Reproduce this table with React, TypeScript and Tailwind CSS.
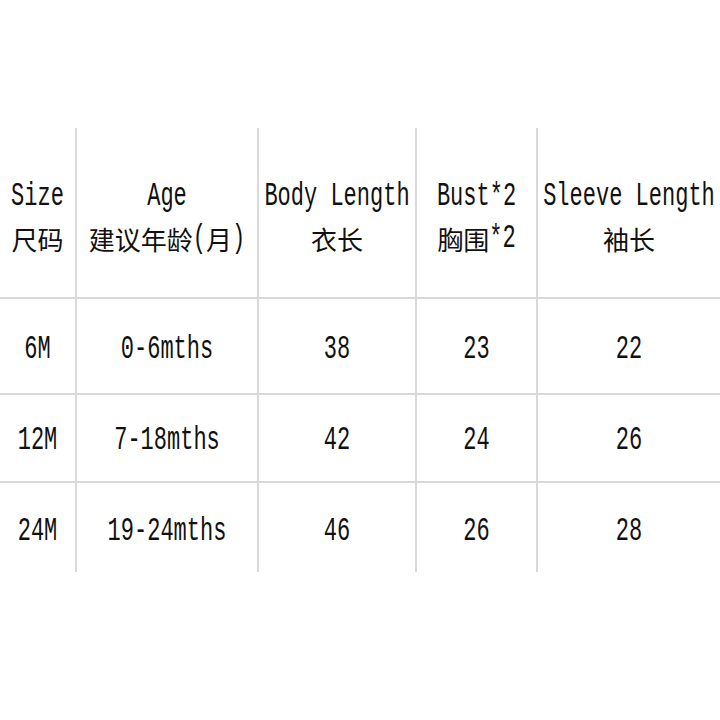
import React from "react";

const L = ({ children }: { children: React.ReactNode }) => (
  <span className="inline-block font-['Liberation_Mono',monospace] text-[22px] leading-[44px] scale-y-[1.55] whitespace-pre text-[#111]">
    {children}
  </span>
);

const C = ({ children }: { children: React.ReactNode }) => (
  <span className="inline-block font-['Noto_Sans_CJK_SC',sans-serif] text-[26px] leading-[44px] text-[#111]">
    {children}
  </span>
);

const cols = "grid grid-cols-[75px_182px_158px_121px_184px]";

const headers: React.ReactNode[][] = [
  [<L>Size</L>, <C>尺码</C>],
  [<L>Age</L>, <><C>建议年龄</C><L>(</L><C>月</C><L>)</L></>],
  [<L>Body Length</L>, <C>衣长</C>],
  [<L>Bust*2</L>, <><C>胸围</C><L>*2</L></>],
  [<L>Sleeve Length</L>, <C>袖长</C>],
];

const rows = [
  { h: "h-[96px]", pt: "pt-[8px]", cells: ["6M", "0-6mths", "38", "23", "22"] },
  { h: "h-[88px]", pt: "pt-[6px]", cells: ["12M", "7-18mths", "42", "24", "26"] },
  { h: "h-[91px]", pt: "pt-[9px]", cells: ["24M", "19-24mths", "46", "26", "28"] },
];

export default function App() {
  return (
    <div className="w-[720px] h-[720px] bg-white pt-[128px] overflow-hidden">
      <div className={`${cols} h-[169px]`}>
        {headers.map((h, i) => (
          <div
            key={i}
            className={`flex flex-col items-center pt-[47px] ${i > 0 ? "border-l-2 border-[#d9d9d9]" : ""}`}
          >
            <div className="flex items-center justify-center h-[44px] whitespace-nowrap">{h[0]}</div>
            <div className="flex items-center justify-center h-[40px] whitespace-nowrap">{h[1]}</div>
          </div>
        ))}
      </div>
      {rows.map((r, ri) => (
        <div key={ri} className={`${cols} ${r.h} border-t-2 border-[#d9d9d9]`}>
          {r.cells.map((c, i) => (
            <div
              key={i}
              className={`flex items-center justify-center ${r.pt} ${i > 0 ? "border-l-2 border-[#d9d9d9]" : ""}`}
            >
              <L>{c}</L>
            </div>
          ))}
        </div>
      ))}
    </div>
  );
}
